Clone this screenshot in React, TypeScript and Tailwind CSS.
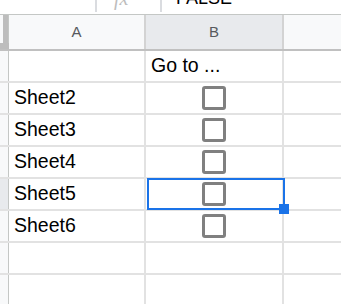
import React from 'react'

const rows = ['', 'Sheet2', 'Sheet3', 'Sheet4', 'Sheet5', 'Sheet6', '', '']

function Checkbox() {
  return <div className="w-[24px] h-[24px] border-[3px] border-[#808080] rounded-[3px] bg-white" />
}

export default function App() {
  return (
    <div className="relative w-[341px] h-[304px] overflow-hidden bg-white font-['Liberation_Sans',Arial,sans-serif] text-black">
      {/* formula bar, cut off at the top */}
      <div className="h-[15px] flex items-start border-b border-[#c4c7c5] overflow-hidden">
        <div className="w-[95px]" />
        <div className="w-[2px] h-[12px] bg-[#dadce0]" />
        <div className="w-[63px] pl-[17px]">
          <span className="block mt-[-12px] text-[20px] leading-none italic text-[#bdbdbd] font-['Liberation_Serif',serif]">
            fx
          </span>
        </div>
        <div className="w-[2px] h-[12px] bg-[#dadce0]" />
        <div className="pl-[14px]">
          <span className="block mt-[-11px] text-[18px] leading-none">FALSE</span>
        </div>
      </div>

      {/* column headers */}
      <div className="flex h-[36px] border-b-2 border-[#c0c0c0] text-[15px] text-[#575a5e]">
        <div className="w-[9px] flex flex-col bg-[#f8f9fa]">
          <div className="flex flex-1">
            <div className="w-[3px]" />
            <div className="w-[5px] bg-[#bdbdbd]" />
            <div className="w-[1px] bg-[#c4c7c5]" />
          </div>
          <div className="h-[6px] bg-[#bdbdbd]" />
        </div>
        <div className="w-[137px] flex items-center justify-center bg-[#f8f9fa] border-r-2 border-[#d3d3d3]">A</div>
        <div className="w-[138px] flex items-center justify-center bg-[#e8eaed] border-r-2 border-[#d3d3d3]">B</div>
        <div className="flex-1 bg-[#f8f9fa]" />
      </div>

      {/* grid rows */}
      {rows.map((name, i) => (
        <div key={i} className="flex h-[32px] border-b-2 border-[#e2e2e2]">
          <div
            className={`w-[9px] border-r border-[#c4c7c5] ${i === 4 ? 'bg-[#e8eaed]' : 'bg-[#f8f9fa]'}`}
          />
          <div className="w-[137px] flex items-end pb-[1px] pl-[5px] border-r-2 border-[#e2e2e2] text-[19.5px] leading-normal">
            {name}
          </div>
          <div className="w-[138px] flex items-center justify-center border-r-2 border-[#e2e2e2]">
            {i === 0 ? (
              <div className="self-end pb-[1px] w-full pl-[5px] text-[19.5px] leading-normal">Go to ...</div>
            ) : name ? (
              <Checkbox />
            ) : null}
          </div>
          <div className="flex-1" />
        </div>
      ))}

      {/* selected cell B5 */}
      <div className="absolute left-[147px] top-[178px] w-[138px] h-[32px] border-2 border-[#1a73e8]" />
      <div className="absolute left-[279px] top-[204px] w-[10px] h-[10px] bg-[#1a73e8]" />
    </div>
  )
}
